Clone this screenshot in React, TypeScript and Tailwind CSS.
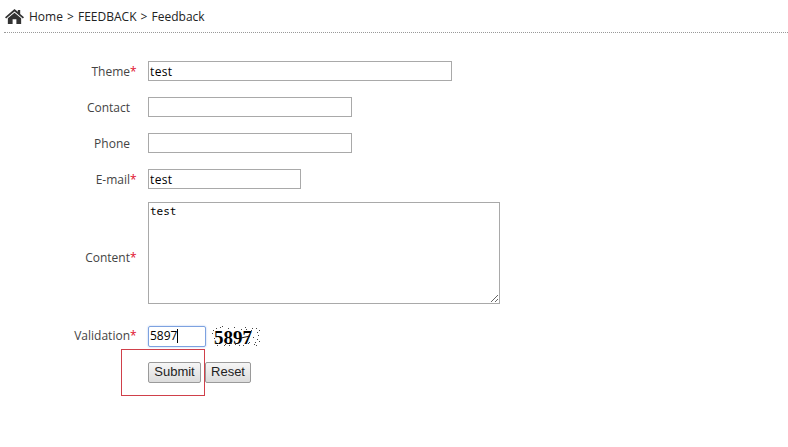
const labelClass = "flex w-[130px] shrink-0 justify-end pt-[1px]";
const inputClass = "h-5 border border-[#a9a9a9] bg-white px-[1px] text-[12px] tracking-[0.03em] text-black outline-none";
const buttonClass =
  "h-[21px] rounded-[2px] border border-[#9a9a9a] bg-gradient-to-b from-[#f6f6f6] to-[#dcdcdc] pb-[1px] font-['Liberation_Sans',sans-serif] text-[13px] leading-[18px] text-[#222222]";

type FormLabelProps = {
  text: string;
  required?: boolean;
};

function FormLabel({ text, required }: FormLabelProps) {
  return (
    <div className={labelClass}>
      <span className="relative">
        {text}
        {required && <span className="absolute left-full top-0 text-[#e0102a]">*</span>}
      </span>
    </div>
  );
}

function HomeIcon() {
  return (
    <svg width="19" height="15" viewBox="0 0 20 16" preserveAspectRatio="none" className="shrink-0">
      <path
        fill="#333333"
        d="M10 0 L13.5 3 V1 H16 V5.2 L20 8.8 L18.8 10 L10 2.6 L1.2 10 L0 8.8 Z M10 4 L17 9.8 V16 H12 V11 H8 V16 H3 V9.8 Z"
      />
    </svg>
  );
}

const dots = [
  [0, 8], [1, 5], [2, 13], [3, 17], [4, 3], [5, 20], [6, 18], [8, 2], [10, 1], [12, 20], [13, 19], [16, 3], [17, 20],
  [19, 18], [22, 2], [23, 19], [26, 18], [27, 20], [29, 4], [31, 20], [33, 2], [34, 4], [36, 18], [37, 17], [39, 5],
  [40, 3], [41, 12], [42, 19], [43, 17], [44, 3], [45, 7], [45, 14], [46, 10], [47, 5], [47, 16], [44, 20],
];

function Captcha() {
  return (
    <div className="relative ml-[6px] h-[22px] w-[48px]">
      <span className="absolute left-[2px] top-[1px] font-['Liberation_Serif',serif] text-[19px] leading-[24px] font-bold text-black">
        5897
      </span>
      <svg width="48" height="24" viewBox="0 0 48 24" className="absolute inset-0">
        {dots.map(([x, y]) => (
          <rect key={`${x}-${y}`} x={x} y={y} width="1" height="1" fill="#444444" />
        ))}
        <line x1="29" y1="13" x2="38" y2="11" stroke="#111111" strokeWidth="1" />
      </svg>
    </div>
  );
}

export default function App() {
  return (
    <div className="relative h-[447px] w-[788px] overflow-hidden bg-white font-['Open_Sans',sans-serif] text-[12px] text-[#444444]">
      <div className="ml-[4px] flex h-[33px] items-center gap-[5px] border-b border-dotted border-[#999999] pl-[1px] pt-[1px] text-[#222222]">
        <HomeIcon />
        <span className="[word-spacing:1px]">Home &gt; FEEDBACK &gt; Feedback</span>
      </div>

      <div className="flex flex-col pt-[28px]">
        <div className="flex items-center gap-[18px]">
          <FormLabel text="Theme" required />
          <input readOnly value="test" className={`${inputClass} w-[304px]`} />
        </div>
        <div className="mt-4 flex items-center gap-[18px]">
          <FormLabel text="Contact" />
          <input readOnly value="" className={`${inputClass} w-[204px]`} />
        </div>
        <div className="mt-4 flex items-center gap-[18px]">
          <FormLabel text="Phone" />
          <input readOnly value="" className={`${inputClass} w-[204px]`} />
        </div>
        <div className="mt-4 flex items-center gap-[18px]">
          <FormLabel text="E-mail" required />
          <input readOnly value="test" className={`${inputClass} w-[153px]`} />
        </div>
        <div className="mt-[13px] flex items-center gap-[18px]">
          <div className="pt-2">
            <FormLabel text="Content" required />
          </div>
          <textarea
            readOnly
            value="test"
            className="h-[102px] w-[352px] border border-[#a9a9a9] bg-white px-[1px] py-[2px] font-['DejaVu_Sans_Mono',monospace] text-[11px] leading-[14px] text-black outline-none"
          />
        </div>
        <div className="mt-[21px] flex items-center gap-[18px]">
          <div className="-mt-[2px]">
            <FormLabel text="Validation" required />
          </div>
          <div className="flex items-center">
            <div className="flex h-[21px] w-[58px] items-center rounded-[2px] border border-[#7da2e0] px-[1px] text-[12px] text-black shadow-[0_0_2px_#a9c3ee]">
              5897
              <span className="h-[14px] w-px bg-black" />
            </div>
            <Captcha />
          </div>
        </div>
        <div className="mt-[15px] flex gap-1 pl-[148px]">
          <button className={`${buttonClass} w-[53px]`}>Submit</button>
          <button className={`${buttonClass} w-[46px]`}>Reset</button>
        </div>
      </div>

      {/* annotation drawn over the screenshot */}
      <div className="absolute left-[121px] top-[349px] h-[47px] w-[84px] border border-[#d0404a]" />
    </div>
  );
}
